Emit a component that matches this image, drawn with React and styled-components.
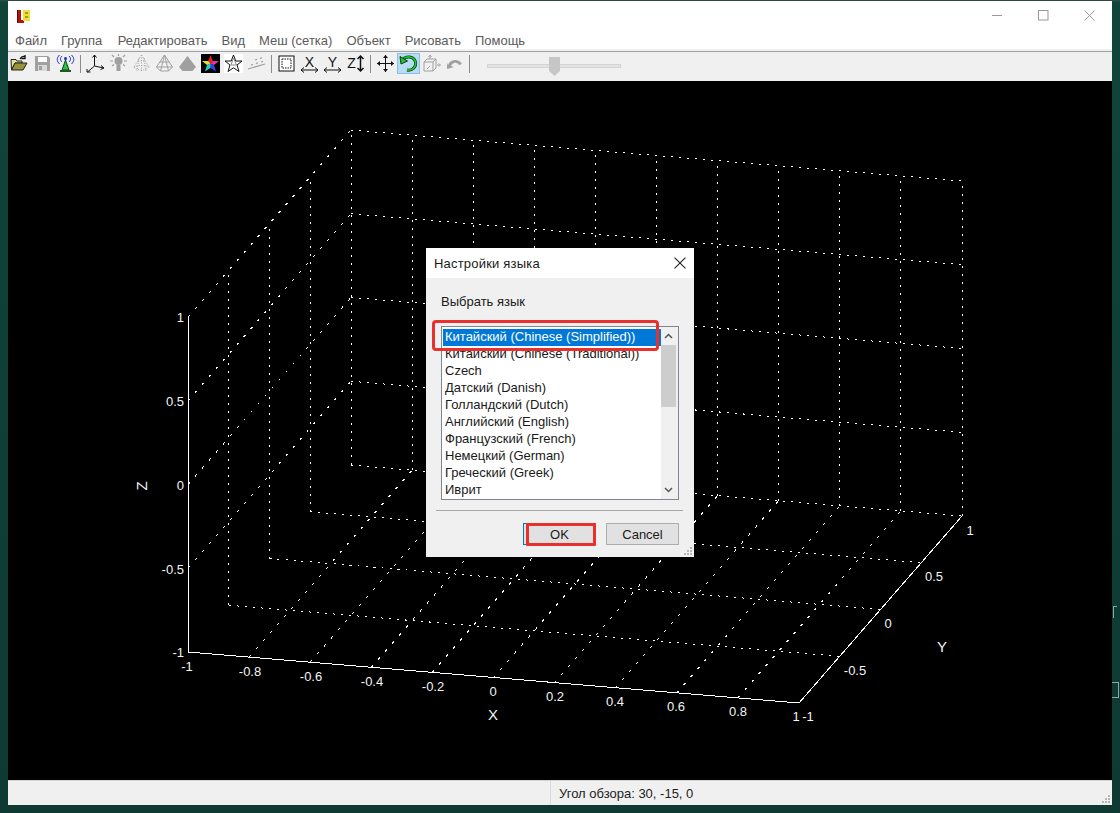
import React from 'react';
import styled, { createGlobalStyle } from 'styled-components';

const GlobalStyle = createGlobalStyle`
  html, body {
    margin: 0;
    padding: 0;
    height: 813px;
    overflow: hidden;
    background: #0f3d35;
    font-family: "Liberation Sans", Arial, sans-serif;
  }
`;

const Desktop = styled.div`
  width: 1120px;
  height: 813px;
  padding: 1px 8px 8px;
  box-sizing: border-box;
  background: linear-gradient(180deg, #2c4a46 0, #2c4a46 1px, #10443a 2px, #0e3a33 100%);
`;

const Window = styled.div`
  display: flex;
  flex-direction: column;
  width: 1104px;
  height: 804px;
  background: #fff;
`;

const TitleBar = styled.div`
  display: flex;
  align-items: center;
  justify-content: space-between;
  height: 30px;
  flex: none;
  padding: 0 0 0 9px;
`;

const WinControls = styled.div`
  display: flex;
  height: 29px;
`;

const WinButton = styled.div`
  width: 46px;
  height: 29px;
  display: flex;
  align-items: center;
  justify-content: center;
  padding-bottom: 1px;
  box-sizing: border-box;
`;

const MenuBar = styled.div`
  display: flex;
  height: 19px;
  flex: none;
  padding-left: 7px;
  gap: 14px;
  align-items: center;
  font-size: 13px;
  color: #5a5a5a;
`;

const MenuItem = styled.span`
  white-space: nowrap;

  &:nth-child(2) {
    margin-right: 1.500px;
  }
`;

const Toolbar = styled.div`
  display: flex;
  flex: none;
  height: 30px;
  margin-top: 1px;
  padding-top: 1px;
  box-sizing: border-box;
  align-items: flex-start;
  background: #f0f0f0;
  border-top: 1px solid #a0a0a0;
  box-shadow: 0 -2px 0 #f0f0f0;
`;

const ToolButton = styled.div`
  width: 23px;
  height: 21px;
  flex: none;
  display: flex;
  align-items: center;
  justify-content: center;
  box-sizing: border-box;
  background: ${p => (p.$active ? '#b9dcf5' : 'transparent')};
  border: 1px solid ${p => (p.$active ? '#8cbfe8' : 'transparent')};
`;

const ToolSep = styled.div`
  width: 1px;
  height: 18px;
  margin: 2px 3px 0 3px;
  flex: none;
  background: #8a8a8a;
`;

const SliderTrack = styled.div`
  position: relative;
  width: 134px;
  height: 4px;
  margin: 11px 0 0 14px;
  background: #e4e4e4;
  border: 1px solid #d4d4d4;
  box-sizing: border-box;
`;

const SliderThumb = styled.div`
  position: absolute;
  left: 61px;
  top: -8px;
  width: 11px;
  height: 19px;
  background: #c6c6c6;
  clip-path: polygon(0 0, 100% 0, 100% 74%, 50% 100%, 0 74%);
`;

const Canvas = styled.div`
  position: relative;
  flex: 1;
  background: #000;
  min-height: 0;
`;

const PlotSvg = styled.svg`
  display: block;
  width: 1104px;
  height: 699px;
`;

const PlotText = styled.text`
  fill: #f4f4f4;
  font-family: "Liberation Sans", Arial, sans-serif;
  font-size: ${p => (p.$axis ? 15 : 13)}px;
`;

const StatusBar = styled.div`
  display: flex;
  flex: none;
  height: 25px;
  background: #f0f0f0;
  border-top: 1px solid #d4d4d4;
  box-sizing: border-box;
  position: relative;
  font-size: 13px;
  color: #222;
`;

const StatusPanel = styled.div`
  width: 542px;
  flex: none;
  border-right: 1px solid #dcdcdc;
`;

const StatusText = styled.div`
  padding: 5px 0 0 8px;
  white-space: nowrap;
`;

const Grip = styled.svg`
  position: absolute;
  right: 1px;
  bottom: 1px;
`;

const Dialog = styled.div`
  position: absolute;
  left: 418px;
  top: 167px;
  width: 268px;
  height: 309px;
  background: #f0f0f0;
  box-sizing: border-box;
  display: flex;
  flex-direction: column;
  font-size: 13px;
  color: #1a1a1a;
`;

const DialogTitle = styled.div`
  height: 30px;
  flex: none;
  background: #fff;
  display: flex;
  align-items: center;
  justify-content: space-between;
  padding: 0 8px;
  font-size: 13px;
  letter-spacing: 0.2px;
`;

const DialogLabel = styled.div`
  margin: 16px 0 0 15px;
  height: 15px;
  line-height: 15px;
`;

const ListBox = styled.div`
  position: relative;
  margin: 17px 0 0 15px;
  width: 238px;
  height: 174px;
  flex: none;
  box-sizing: border-box;
  background: #fff;
  border: 1px solid #7f8690;
  display: flex;
`;

const ListItems = styled.div`
  flex: 1;
  padding: 2px 0 0 1px;
`;

const ListItem = styled.div`
  height: 17px;
  line-height: 16px;
  padding-left: 2px;
  white-space: nowrap;
  overflow: hidden;
  width: 216px;
  background: ${p => (p.$selected ? '#0078d7' : 'transparent')};
  color: ${p => (p.$selected ? '#fff' : '#1a1a1a')};
`;

const ScrollBar = styled.div`
  width: 17px;
  flex: none;
  background: #f0f0f0;
  display: flex;
  flex-direction: column;
  align-items: center;
  justify-content: space-between;
  position: relative;
`;

const ScrollThumb = styled.div`
  position: absolute;
  left: 0;
  top: 18px;
  width: 15px;
  height: 62px;
  background: #cdcdcd;
`;

const ScrollArrow = styled.svg`
  margin: 6px 2px 6px 0;
`;

const Divider = styled.div`
  margin: 10px 11px 0 10px;
  height: 1px;
  background: #a8a8a8;
`;

const DialogButtons = styled.div`
  display: flex;
  justify-content: flex-end;
  gap: 10px;
  margin: 12px 15px 0 0;
`;

const DialogButton = styled.div`
  width: 73px;
  height: 22px;
  box-sizing: border-box;
  background: #e1e1e1;
  border: 1px solid ${p => (p.$primary ? '#0078d7' : '#adadad')};
  display: flex;
  align-items: center;
  justify-content: center;
`;

const RedMark = styled.div`
  position: absolute;
  box-sizing: border-box;
  border: 3px solid #e8302c;
  border-radius: ${p => p.$radius}px;
  left: ${p => p.$x}px;
  top: ${p => p.$y}px;
  width: ${p => p.$w}px;
  height: ${p => p.$h}px;
`;

const BgScrap = styled.div`
  position: absolute;
  left: ${p => p.$left}px;
  top: ${p => p.$top}px;
  width: ${p => p.$w}px;
  height: ${p => p.$h}px;
  border: solid #8fa5a0;
  border-width: ${p => p.$borders};
  box-sizing: border-box;
`;

// screen coordinates of the plot box corners
const A = [188, 652];
const B = [799, 703];
const C = [962, 516];
const ZH = 335;

const lerp = (p, q, t) => [p[0] + (q[0] - p[0]) * t, p[1] + (q[1] - p[1]) * t];
const D = [A[0] + C[0] - B[0], A[1] + C[1] - B[1]];
const range = n => Array.from({ length: n + 1 }, (_, i) => i / n);
const up = (p, t) => [p[0], p[1] - ZH * t];

function gridLines() {
  const out = [];
  // floor
  range(10).forEach(t => {
    if (t > 0) out.push([lerp(A, B, t), lerp(D, C, t)]);
  });
  range(4).forEach(t => {
    if (t > 0) out.push([lerp(A, D, t), lerp(B, C, t)]);
  });
  // back wall along x
  range(10).forEach(t => {
    const p = lerp(D, C, t);
    out.push([p, up(p, 1)]);
  });
  range(4).forEach(t => out.push([up(D, t), up(C, t)]));
  // side wall along y
  range(4).forEach(t => {
    const p = lerp(A, D, t);
    if (t > 0) out.push([p, up(p, 1)]);
  });
  range(4).forEach(t => {
    if (t > 0) out.push([up(A, t), up(D, t)]);
  });
  return out;
}

// the plot's stipple repeats every 8px along the line's longer axis
function stipple(p, q) {
  const dx = Math.abs(q[0] - p[0]);
  const dy = Math.abs(q[1] - p[1]);
  const k = Math.hypot(dx, dy) / Math.max(dx, dy);
  return `${(2 * k).toFixed(2)} ${(6 * k).toFixed(2)}`;
}

const labels = [
  ['1', 184, 322, 'end'],
  ['0.5', 184, 406, 'end'],
  ['0', 184, 490, 'end'],
  ['-0.5', 184, 574, 'end'],
  ['-1', 184, 657, 'end'],
  ['-1', 187, 671, 'middle'],
  ['-0.8', 250, 676, 'middle'],
  ['-0.6', 311, 681, 'middle'],
  ['-0.4', 372, 686, 'middle'],
  ['-0.2', 433, 691, 'middle'],
  ['0', 493, 696, 'middle'],
  ['0.2', 555, 701, 'middle'],
  ['0.4', 615, 706, 'middle'],
  ['0.6', 676, 711, 'middle'],
  ['0.8', 738, 716, 'middle'],
  ['1', 796, 721, 'middle'],
  ['-1', 808, 721, 'middle'],
  ['-0.5', 855, 675, 'middle'],
  ['0', 888, 628, 'middle'],
  ['0.5', 934, 581, 'middle'],
  ['1', 970, 535, 'middle']
];

const Plot = () => (
  <PlotSvg viewBox="8 81 1104 699">
    <g stroke="#fff" strokeWidth="1" shapeRendering="crispEdges">
      {gridLines().map(([p, q], i) => (
        <line key={i} x1={p[0]} y1={p[1]} x2={q[0]} y2={q[1]} strokeDasharray={stipple(p, q)} />
      ))}
    </g>
    <path
      d={`M${A[0]} ${A[1] - ZH}V${A[1]}L${B[0]} ${B[1]}L${C[0]} ${C[1]}`}
      fill="none"
      stroke="#fff"
      strokeWidth="1"
      shapeRendering="crispEdges"
    />
    {labels.map(([t, x, y, anchor], i) => (
      <PlotText key={i} x={x} y={y} textAnchor={anchor}>
        {t}
      </PlotText>
    ))}
    <PlotText $axis x={493} y={720} textAnchor="middle">
      X
    </PlotText>
    <PlotText $axis x={942} y={652} textAnchor="middle">
      Y
    </PlotText>
    <PlotText $axis x={147} y={486} textAnchor="middle" transform="rotate(-90 147 486)">
      Z
    </PlotText>
  </PlotSvg>
);

const G = '#a0a0a0';

const Ico = ({ children }) => (
  <svg width="19" height="19" viewBox="0 0 19 19">
    {children}
  </svg>
);

const FolderIcon = () => (
  <Ico>
    <path d="M1 5.500h5l1 1.500h5V9H5L1.500 16z" fill="#e8e2a0" stroke="#222" />
    <path d="M1.500 16h11.500L17 9H5z" fill="#9a9438" stroke="#222" />
    <path d="M10 5c1-2 3-3 5-2.500M15 1v3.500h-3.500" fill="none" stroke="#111" strokeWidth="1.300" />
  </Ico>
);

const SaveIcon = () => (
  <Ico>
    <path d="M2 2h13l2 2v13H2z" fill={G} />
    <rect x="5" y="3" width="9" height="5" fill="#fff" />
    <rect x="5" y="11" width="9" height="6" fill="#d8d8d8" />
    <rect x="6" y="12" width="3" height="4" fill={G} />
  </Ico>
);

const AntennaIcon = () => (
  <Ico>
    <path d="M9.500 6l3.500 10H6z" fill="#2fbf4a" stroke="#0a4a18" />
    <rect x="4" y="16" width="11" height="2" fill="#1c5a2a" />
    <circle cx="9.500" cy="4.500" r="1.500" fill="#1d2bd0" />
    <path d="M6 2c-2 2-2 4 0 6M13 2c2 2 2 4 0 6M3.500 1c-3 3-3 6 0 9M15.500 1c3 3 3 6 0 9" fill="none" stroke="#1d2bd0" />
  </Ico>
);

const AxesIcon = () => (
  <Ico>
    <path d="M8.500 1v11M8.500 12l9 2M8.500 12L1.500 18" fill="none" stroke="#111" />
    <path d="M6.500 3.500l2-2.500 2 2.500M15 11.500l3 2.500-3.500 1.500M1 15v3h3.500" fill="none" stroke="#111" />
  </Ico>
);

const LightIcon = () => (
  <Ico>
    <circle cx="9.500" cy="7" r="4" fill={G} />
    <rect x="7.500" y="11" width="4" height="6" fill={G} />
    <path d="M9.500 0v2M3 1l2 2M16 1l-2 2M1 7h3M15 7h3M3 12l2-1.500M16 12l-2-1.500" stroke={G} strokeWidth="1.200" />
  </Ico>
);

const DotConeIcon = () => (
  <Ico>
    <g stroke={G} strokeDasharray="1 1.500" fill="none">
      <path d="M9.500 1L2 13M9.500 1l7.500 12M9.500 1v16M2 13c2 4 13 4 15 0M2 13c3-2 12-2 15 0M6 7h7" />
      <path d="M7 4l-2 13M12 4l2 13" />
    </g>
  </Ico>
);

const WireConeIcon = () => (
  <Ico>
    <g stroke={G} fill="none">
      <path d="M9.500 1L1.500 13l4 4h8l4-4zM1.500 13h16M5.500 17L9.500 1l4 16M5 8h9" />
    </g>
  </Ico>
);

const SolidConeIcon = () => (
  <Ico>
    <path d="M9.500 2L1 13l3.500 4h10l3.500-4z" fill={G} />
  </Ico>
);

const starPts = '9.500,1 11.800,7 18,7 13,11 15,17.500 9.500,13.800 4,17.500 6,11 1,7 7.200,7';

const rainbowWedges = [
  ['9.500,9.500 7.200,7 9.500,1 11.800,7', '#f02020'],
  ['9.500,9.500 11.800,7 18,7 13,11', '#f030a0'],
  ['9.500,9.500 13,11 15,17.500 9.500,13.800', '#3a40f0'],
  ['9.500,9.500 9.500,13.800 4,17.500 6,11', '#18d8c8'],
  ['9.500,9.500 6,11 1,7 7.200,7', '#e8e020']
];

const RainbowStarIcon = () => (
  <Ico>
    <rect x="0" y="0" width="19" height="19" fill="#000" />
    {rainbowWedges.map(([pts, c]) => (
      <polygon key={c} points={pts} fill={c} />
    ))}
  </Ico>
);

const StarIcon = () => (
  <Ico>
    <rect x="0" y="0" width="19" height="19" fill="#fff" />
    <polygon points={starPts} fill="#fff" stroke="#111" />
    <path d="M9.500 4L7 11l5.500 0z" fill="none" stroke="#888" />
  </Ico>
);

const DashesIcon = () => (
  <Ico>
    <path d="M1 15l17-5M4 11l2-.6M9 9.500l2-.6M14 8l2-.6M8 6l2-.6M13 4.500l2-.6" stroke={G} strokeWidth="1.300" />
  </Ico>
);

const BoxIcon = () => (
  <Ico>
    <rect x="2" y="2" width="15" height="15" fill="#fff" stroke="#111" />
    <rect x="5" y="5" width="9" height="9" fill="none" stroke="#111" strokeDasharray="1.500 1" />
  </Ico>
);

const AxisLetterIcon = ({ letter }) => (
  <Ico>
    <text x="9.500" y="13" textAnchor="middle" fontSize="14" fontFamily="Liberation Sans, sans-serif" fill="#111">
      {letter}
    </text>
    <path d="M1 16h17M4 13.500L1 16l3 2.500M15 13.500l3 2.500-3 2.500" fill="none" stroke="#111" />
  </Ico>
);

const ZIcon = () => (
  <Ico>
    <text x="5.500" y="14" textAnchor="middle" fontSize="14" fontFamily="Liberation Sans, sans-serif" fill="#111">
      Z
    </text>
    <path d="M14.500 2v15M11.500 5l3-3 3 3M11.500 14l3 3 3-3" fill="none" stroke="#111" strokeWidth="1.500" />
  </Ico>
);

const MoveIcon = () => (
  <Ico>
    <path d="M9.500 1v17M1 9.500h17" stroke="#111" />
    <path d="M7 4l2.500-3L12 4zM7 15l2.500 3 2.500-3zM4 7L1 9.500 4 12zM15 7l3 2.500-3 2.500z" fill="#111" />
  </Ico>
);

const RotateIcon = () => (
  <Ico>
    <path d="M4 5.500c3-4 11-3.500 12.500 2.500 1 5-3.500 9-8.500 8" fill="none" stroke="#0b3d12" strokeWidth="3" />
    <path d="M4 5.500c3-4 11-3.500 12.500 2.500 1 5-3.500 9-8.500 8" fill="none" stroke="#24c23a" strokeWidth="1.700" />
    <path d="M1 2.500l1 7.500 6.500-3z" fill="#24c23a" stroke="#0b3d12" />
  </Ico>
);

const CubeMoveIcon = () => (
  <Ico>
    <path d="M2 8h9v9H2zM2 8l3-3h9l-3 3M14 5v9l-3 3" fill="none" stroke={G} />
    <path d="M5 15l3-3M8 2l0 3M6.500 3l1.500-2 1.500 2M15 11h3M17 9.500l1.500 1.500-1.500 1.500" fill="none" stroke={G} />
  </Ico>
);

const ArcIcon = () => (
  <Ico>
    <path d="M3 11c2-6 11-7 14-1l-3 1c-2-3-6-3-8 1l3 1-7 2 0-6z" fill={G} />
  </Ico>
);

const Logo = () => (
  <svg width="14" height="13" viewBox="0 0 14 13">
    <path d="M1 0h3v10h3v3H1z" fill="#b31212" />
    <rect x="0" y="0" width="1" height="13" fill="#5a0a0a" />
    <rect x="6" y="0" width="7" height="11" fill="#ecdf3a" />
    <rect x="8" y="2" width="3" height="2" fill="#a89c1e" />
    <rect x="8" y="6" width="3" height="2" fill="#a89c1e" />
  </svg>
);

const MinIcon = () => (
  <svg width="11" height="11" viewBox="0 0 11 11">
    <path d="M0 5.500h10" stroke="#999" />
  </svg>
);
const MaxIcon = () => (
  <svg width="11" height="11" viewBox="0 0 11 11">
    <rect x="0.500" y="0.500" width="9.500" height="9.500" fill="none" stroke="#999" />
  </svg>
);
const CloseIcon = ({ color = '#999', size = 11 }) => (
  <svg width={size} height={size} viewBox="0 0 11 11">
    <path d="M0.500 0.500l10 10M10.500 0.500l-10 10" stroke={color} />
  </svg>
);

const GripDots = () => (
  <Grip width="10" height="10" viewBox="0 0 10 10">
    <path d="M7 1h2v2H7zM4 4h2v2H4zM7 4h2v2H7zM1 7h2v2H1zM4 7h2v2H4zM7 7h2v2H7z" fill="#b8b8b8" />
  </Grip>
);

const menu = ['Файл', 'Группа', 'Редактировать', 'Вид', 'Меш (сетка)', 'Объект', 'Рисовать', 'Помощь'];

const languages = [
  'Китайский (Chinese (Simplified))',
  'Китайский (Chinese (Traditional))',
  'Czech',
  'Датский (Danish)',
  'Голландский (Dutch)',
  'Английский (English)',
  'Французский (French)',
  'Немецкий (German)',
  'Греческий (Greek)',
  'Иврит'
];

const toolGroups = [
  [<FolderIcon />, <SaveIcon />, <AntennaIcon />],
  [
    <AxesIcon />,
    <LightIcon />,
    <DotConeIcon />,
    <WireConeIcon />,
    <SolidConeIcon />,
    <RainbowStarIcon />,
    <StarIcon />,
    <DashesIcon />
  ],
  [<BoxIcon />, <AxisLetterIcon letter="X" />, <AxisLetterIcon letter="Y" />, <ZIcon />],
  [<MoveIcon />, <RotateIcon />, <CubeMoveIcon />, <ArcIcon />]
];

export default function App() {
  return (
    <Desktop>
      <GlobalStyle />
      <BgScrap $left={1113} $top={606} $w={4} $h={12} $borders="1px 0 0 1px" />
      <BgScrap $left={1112} $top={682} $w={7} $h={16} $borders="1px 1px 1px 0" />
      <Window>
        <TitleBar>
          <Logo />
          <WinControls>
            <WinButton>
              <MinIcon />
            </WinButton>
            <WinButton>
              <MaxIcon />
            </WinButton>
            <WinButton>
              <CloseIcon />
            </WinButton>
          </WinControls>
        </TitleBar>
        <MenuBar>
          {menu.map(m => (
            <MenuItem key={m}>{m}</MenuItem>
          ))}
        </MenuBar>
        <Toolbar>
          {toolGroups.map((group, g) => (
            <React.Fragment key={g}>
              {group.map((icon, i) => (
                <ToolButton key={i} $active={g === 3 && i === 1}>
                  {icon}
                </ToolButton>
              ))}
              <ToolSep />
            </React.Fragment>
          ))}
          <SliderTrack>
            <SliderThumb />
          </SliderTrack>
        </Toolbar>
        <Canvas>
          <Plot />
          <Dialog>
            <DialogTitle>
              Настройки языка
              <CloseIcon color="#222" size={12} />
            </DialogTitle>
            <DialogLabel>Выбрать язык</DialogLabel>
            <ListBox>
              <ListItems>
                {languages.map((l, i) => (
                  <ListItem key={l} $selected={i === 0}>
                    {l}
                  </ListItem>
                ))}
              </ListItems>
              <ScrollBar>
                <ScrollArrow width="9" height="6" viewBox="0 0 9 6">
                  <path d="M1 5l3.500-3.500L8 5" fill="none" stroke="#555" strokeWidth="1.500" />
                </ScrollArrow>
                <ScrollThumb />
                <ScrollArrow width="9" height="6" viewBox="0 0 9 6">
                  <path d="M1 1l3.500 3.500L8 1" fill="none" stroke="#555" strokeWidth="1.500" />
                </ScrollArrow>
              </ScrollBar>
            </ListBox>
            <Divider />
            <DialogButtons>
              <DialogButton $primary>OK</DialogButton>
              <DialogButton>Cancel</DialogButton>
            </DialogButtons>
            <GripDots />
            <RedMark $x={6} $y={72} $w={227} $h={31} $radius={4} />
            <RedMark $x={100} $y={275} $w={70} $h={23} $radius={1} />
          </Dialog>
        </Canvas>
        <StatusBar>
          <StatusPanel />
          <StatusText>Угол обзора: 30, -15, 0</StatusText>
          <GripDots />
        </StatusBar>
      </Window>
    </Desktop>
  );
}
